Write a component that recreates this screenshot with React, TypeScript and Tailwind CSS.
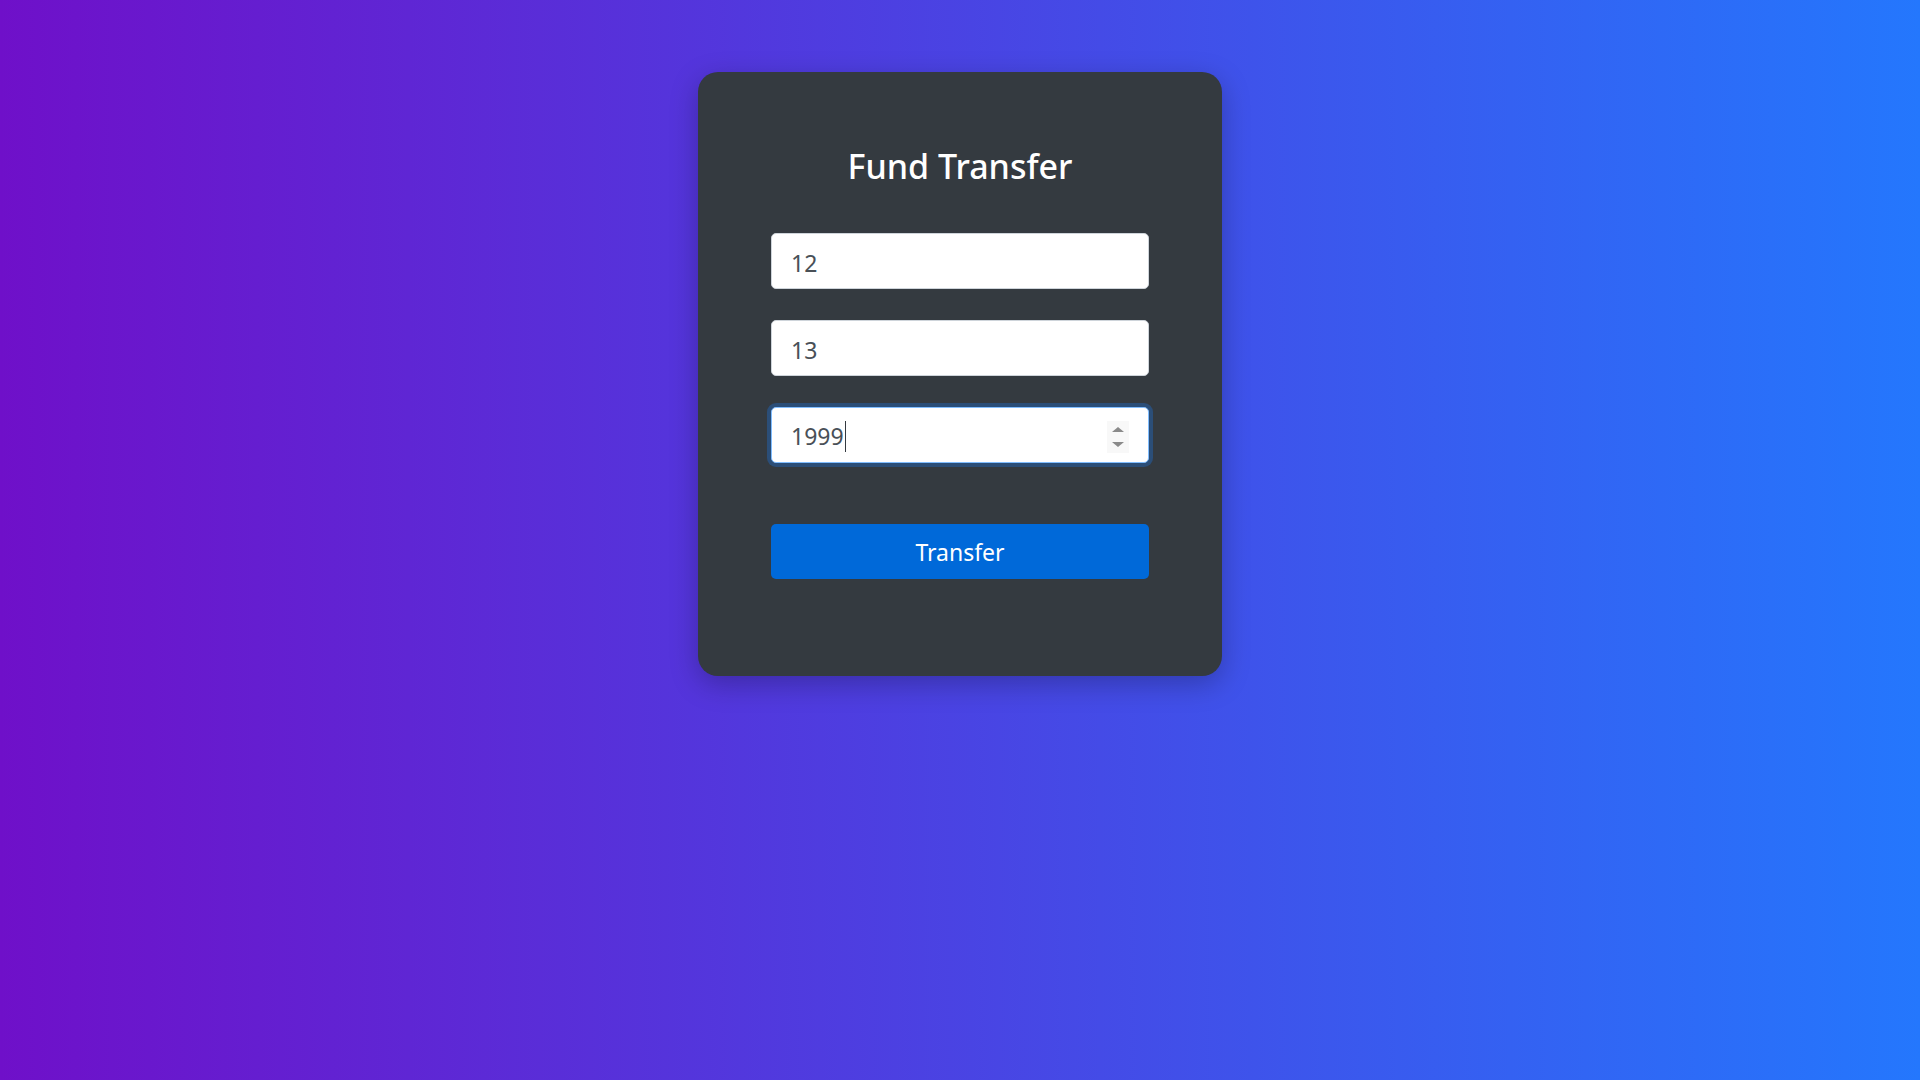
export default function App() {
  return (
    <div className="min-h-screen w-full bg-linear-to-r/srgb from-[#6f10c9] to-[#2477fd] font-['Noto_Sans',sans-serif]">
      <div className="flex justify-center pt-[72px]">
        <div className="w-[524px] h-[604px] rounded-[20px] bg-[#343a40] px-[73px] pt-[73px] shadow-[0_8px_28px_rgba(0,0,0,0.25)]">
          <h2 className="text-center text-[34px] leading-[43px] font-medium text-white">Fund Transfer</h2>

          <form className="mt-[45px] flex flex-col gap-[31px]" onSubmit={(e) => e.preventDefault()}>
            <input
              type="text"
              defaultValue="12"
              className="h-[56px] w-full rounded-[5px] border border-[#ced4da] bg-white px-[19px] pt-[3px] text-[23px] text-[#495057] outline-none"
            />
            <input
              type="text"
              defaultValue="13"
              className="h-[56px] w-full rounded-[5px] border border-[#ced4da] bg-white px-[19px] pt-[3px] text-[23px] text-[#495057] outline-none"
            />
            {/* focused amount field */}
            <div className="relative flex h-[56px] w-full items-center rounded-[5px] border border-[#80bdff] bg-white px-[19px] pt-[3px] text-[23px] text-[#495057] shadow-[0_0_0_4px_#2b4e78]">
              <span>1999</span>
              <span className="ml-px h-[31px] w-px bg-[#343a40]" />
              <div className="absolute right-[19px] top-[13px] flex h-[32px] w-[22px] flex-col items-center justify-center gap-[10px] bg-[#f8f8f8]">
                <span className="h-0 w-0 border-x-[6px] border-b-[5px] border-x-transparent border-b-[#8a8a8a]" />
                <span className="h-0 w-0 border-x-[6px] border-t-[5px] border-x-transparent border-t-[#8a8a8a]" />
              </div>
            </div>

            <button
              type="submit"
              className="mt-[30px] h-[55px] w-full rounded-[5px] bg-[#0069d9] pt-[2px] text-[23px] text-white"
            >
              Transfer
            </button>
          </form>
        </div>
      </div>
    </div>
  );
}
